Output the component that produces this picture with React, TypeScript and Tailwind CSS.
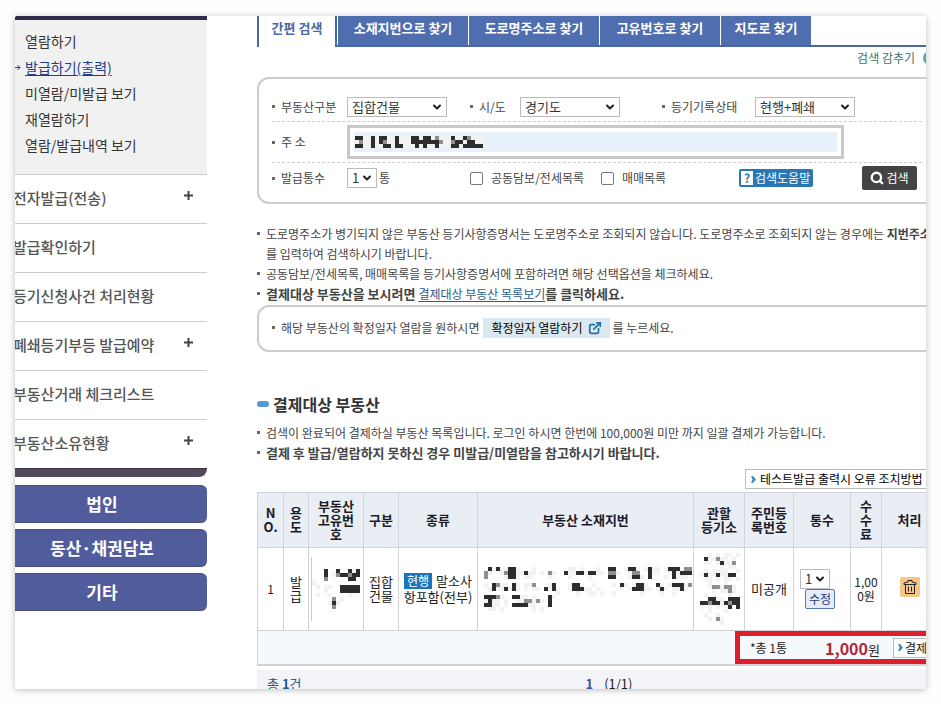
import type { ReactNode } from "react";
import { ChevronDown, ExternalLink, Search } from "lucide-react";

const SUB_MENU = ["열람하기", "발급하기(출력)", "미열람/미발급 보기", "재열람하기", "열람/발급내역 보기"];

const MENU = [
  { label: "전자발급(전송)", more: true },
  { label: "발급확인하기", more: false },
  { label: "등기신청사건 처리현황", more: false },
  { label: "폐쇄등기부등 발급예약", more: true },
  { label: "부동산거래 체크리스트", more: false },
  { label: "부동산소유현황", more: true },
];

const TABS = [
  { label: "소재지번으로 찾기", width: "w-[130px]" },
  { label: "도로명주소로 찾기", width: "w-[130px]" },
  { label: "고유번호로 찾기", width: "w-[120px]" },
  { label: "지도로 찾기", width: "w-[90px]" },
];

const COLUMNS = [
  { label: "N\nO.", width: "w-[26px]" },
  { label: "용\n도", width: "w-[25px]" },
  { label: "부동산\n고유번\n호", width: "w-[55px]" },
  { label: "구분", width: "w-[35px]" },
  { label: "종류", width: "w-[79px]" },
  { label: "부동산 소재지번", width: "w-[216px]" },
  { label: "관할\n등기소", width: "w-[51px]" },
  { label: "주민등\n록번호", width: "w-[49px]" },
  { label: "통수", width: "w-[57px]" },
  { label: "수\n수\n료", width: "w-[31px]" },
  { label: "처리", width: "w-[56px]" },
];

const INPUT_MASK = [
  "##..#.##..#...##.##.+...#..#+...",
  ".+..#.#+..#...#######+..+##.##..",
  "##..#..##.##...#.#..#...##.#####",
];

const ID_MASK = [
  "   #  #  #.#",
  "   # .+##+##",
  "   +     ## ",
  ".           ",
  " . ..  #####",
  "   .   #####",
  " .  .    .  ",
  "     + .    ",
  "    .#.     ",
  "     +      ",
];

const ADDRESS_MASK = [
  "  #.#..##.   .        .. .   .  ##  .##. .#.. .### ++",
  " +.  .+##..#.. . +.  #..##.##.. ++.  .++  #..  .#.###",
  " +    .##. ..    .    .    .    ##   .##. #   . #... ",
  "                                                     ",
  " . #+.. #. ..+   .#   .##.  .    . #. .##.  #. .###.+",
  "  .#..#.#. . .. #.#.  .###.. .     . .###.. .#. ..#. ",
  "                   .    .  .. .  .      .    .  .    ",
  " ###+.  ##.. .   #.                                  ",
  " .#.. .  ..++.+. #                                   ",
  " ##.. . ####..   #                                   ",
  "  .. .       . .                                     ",
];

const OFFICE_MASK = [
  "  . . .. .",
  " #..+.. . ",
  " .. .#..+ ",
  "     . .. ",
  " . ....  .",
  ".#..#..## ",
  " .. . .. .",
  "  .   .   ",
  "  .++.++. ",
  "   . ..+. ",
  " . .   .  ",
  "  ##.. ###",
  "##+##.#+##",
  ". . .  # #",
  "  .   .   ",
  " .  .     ",
  "  . +.    ",
  "     .    ",
];

const MASK_COLORS: Record<string, string> = { "#": "#2d2d2d", "+": "#8f8f8f", ".": "#f2f2f2" };

function Mosaic({ rows, className = "" }: { rows: string[]; className?: string }) {
  const cols = rows[0].length;
  return (
    <svg
      width={cols * 4}
      height={rows.length * 4}
      className={`shrink-0 ${className}`}
      shapeRendering="crispEdges"
      aria-hidden="true"
    >
      {rows.flatMap((row, y) =>
        [...row].map((c, x) =>
          MASK_COLORS[c] ? (
            <rect key={`${x}-${y}`} x={x * 4} y={y * 4} width="4" height="4" fill={MASK_COLORS[c]} />
          ) : null
        )
      )}
    </svg>
  );
}

function Dot() {
  return <span className="mr-1.5 size-[3px] shrink-0 bg-[#666]" />;
}

function Select({ id, label, value, width }: { id: string; label?: string; value: string; width: string }) {
  return (
    <span className={`relative inline-block shrink-0 ${width}`}>
      <select
        id={id}
        aria-label={label}
        className="block h-5 w-full appearance-none border border-[#bbb] bg-white pl-1 text-[13px] leading-4 text-[#333]"
      >
        <option>{value}</option>
      </select>
      <ChevronDown
        className="pointer-events-none absolute top-1 right-1 size-3 text-[#222]"
        strokeWidth={4}
      />
    </span>
  );
}

function Notice({ children, bold }: { children: ReactNode; bold?: boolean }) {
  return (
    <li className="flex">
      <span className="mt-2 mr-1.5 size-[3px] shrink-0 bg-[#666]" />
      <span className={bold ? "text-[13px] font-bold" : ""}>{children}</span>
    </li>
  );
}

function SmallArrow() {
  return (
    <svg width="5" height="7" viewBox="0 0 5 7" className="shrink-0" aria-hidden="true">
      <path d="M0 0h2l3 3.5L2 7H0l1.5-3.5z" fill="#3f8fb0" />
    </svg>
  );
}

function Sidebar() {
  return (
    <aside className="w-48 shrink-0">
      <ul className="border-t-4 border-[#322a4a] bg-[#f1f1f1] pt-2 pb-4 pl-2.5 text-sm leading-[26px] text-[#333]">
        {SUB_MENU.map((item, i) => (
          <li key={item} className="relative">
            {i === 1 && (
              <svg width="6" height="7" viewBox="0 0 6 7" className="absolute top-2.5 -left-2.5" aria-hidden="true">
                <path d="M0 3.5h5M2.5 1L5 3.5 2.5 6" fill="none" stroke="#1f3d8a" />
              </svg>
            )}
            <a href="#" className={i === 1 ? "text-[#1f3d8a] underline underline-offset-2" : ""}>
              {item}
            </a>
          </li>
        ))}
      </ul>
      <ul className="text-[15px] font-medium text-[#555]">
        {MENU.map(({ label, more }) => (
          <li
            key={label}
            className="-ml-0.5 flex h-[49px] items-center justify-between border-t border-[#ccc] pr-3.5 pb-0.5"
          >
            <a href="#">{label}</a>
            {more && (
              <svg width="9" height="9" className="mb-1.5" aria-hidden="true">
                <path d="M0 4.5h9M4.5 0v9" stroke="#444" strokeWidth="2" />
              </svg>
            )}
          </li>
        ))}
      </ul>
      <div className="h-[9px] rounded-br-lg border-t border-[#3d3848] bg-[#504a5c]" />
      <nav className="mt-2 flex flex-col gap-1.5 text-[17px] font-bold text-white">
        {["법인", "동산·채권담보", "기타"].map((item) => (
          <a
            key={item}
            href="#"
            className="flex h-[38px] items-center justify-center rounded-r-md border-y border-[#4a5084] bg-[#515c9d] pr-[18px]"
          >
            {item}
          </a>
        ))}
      </nav>
    </aside>
  );
}

function SearchTabs() {
  return (
    <div className="flex h-[31px] text-[13px] leading-[22px] font-bold text-white">
      <button className="w-20 shrink-0 border-x-2 border-[#4c69a6] pb-2 text-[#4c69a6]">간편 검색</button>
      <div className="flex flex-1 gap-px border-b-2 border-[#4c69a6] pl-px">
        {TABS.map(({ label, width }) => (
          <button key={label} className={`${width} shrink-0 bg-[#4f6eb0] pb-1.5`}>
            {label}
          </button>
        ))}
      </div>
    </div>
  );
}

function SearchForm() {
  return (
    <form className="rounded-xl border-2 border-[#ccc] px-[13px] pt-[13px] pb-[9px]">
      <div className="flex h-[30px] items-center border-b border-dashed border-[#ccc]">
        <label htmlFor="kind" className="flex w-[75px] items-center">
          <Dot />
          부동산구분
        </label>
        <Select id="kind" value="집합건물" width="w-[100px]" />
        <label htmlFor="city" className="ml-[23px] flex w-[50px] items-center">
          <Dot />
          시/도
        </label>
        <Select id="city" value="경기도" width="w-[100px]" />
        <label htmlFor="state" className="ml-[42px] flex w-[93px] items-center">
          <Dot />
          등기기록상태
        </label>
        <Select id="state" value="현행+폐쇄" width="w-[100px]" />
      </div>
      <div className="flex h-[41px] items-center border-b border-dashed border-[#ccc]">
        <label htmlFor="address" className="flex w-[75px] items-center">
          <Dot />주 소
        </label>
        <div className="relative w-[497px]">
          <input
            id="address"
            className="block h-[34px] w-full border-3 border-[#c9c9c9] bg-[#e8f0fb] bg-clip-content p-1"
          />
          <Mosaic rows={INPUT_MASK} className="absolute top-[11px] left-2" />
        </div>
      </div>
      <div className="flex h-[30px] items-center">
        <label htmlFor="copies" className="flex w-[75px] items-center">
          <Dot />
          발급통수
        </label>
        <Select id="copies" value="1" width="w-[30px]" />
        <span className="w-[93px] pl-0.5">통</span>
        <label className="flex w-[131px] items-center gap-2">
          <input type="checkbox" className="size-[13px] appearance-none rounded-xs border border-[#777] bg-white" />
          공동담보/전세목록
        </label>
        <label className="flex w-[138px] items-center gap-2">
          <input type="checkbox" className="size-[13px] appearance-none rounded-xs border border-[#777] bg-white" />
          매매목록
        </label>
        <button
          type="button"
          className="flex h-[18px] w-[74px] items-center gap-0.5 rounded-xs bg-[#2b76b5] pl-0.5 text-white"
        >
          <span className="flex h-3.5 w-3 shrink-0 items-center justify-center bg-white font-bold text-[#2b76b5]">
            ?
          </span>
          검색도움말
        </button>
        <button
          type="button"
          className="ml-[49px] flex h-6 w-[55px] items-center justify-center gap-0.5 rounded-xs bg-[#444] text-white"
        >
          <Search className="size-3.5" strokeWidth={4} />
          검색
        </button>
      </div>
    </form>
  );
}

function PaymentTable() {
  return (
    <table className="w-full table-fixed border-collapse border border-[#d0d3da] text-center text-[13px] leading-[14px] text-[#222]">
      <thead>
        <tr className="h-[55px] bg-[#e9eef5] text-[#1c1c28]">
          {COLUMNS.map(({ label, width }) => (
            <th key={label} className={`${width} border border-[#d0d3da] whitespace-pre-line`}>
              {label}
            </th>
          ))}
        </tr>
      </thead>
      <tbody>
        <tr className="h-[83px] [&>td]:border [&>td]:border-[#d0d3da]">
          <td className="text-xs">1</td>
          <td>
            발<br />급
          </td>
          <td className="pl-0.5">
            <div className="flex h-16 items-center border-l border-[#ccc]">
              <Mosaic rows={ID_MASK} />
            </div>
          </td>
          <td>
            집합
            <br />
            건물
          </td>
          <td className="leading-4">
            <span className="mr-1 inline-block bg-[#1a75bc] px-[3px] text-xs leading-4 text-white">현행</span>
            말소사
            <br />
            항포함(전부)
          </td>
          <td className="pl-0.5">
            <Mosaic rows={ADDRESS_MASK} />
          </td>
          <td>
            <Mosaic rows={OFFICE_MASK} className="ml-1.5" />
          </td>
          <td>미공개</td>
          <td>
            <div className="ml-1.5 flex w-[35px] flex-col">
              <Select id="row-copies" label="통수" value="1" width="w-[30px]" />
              <button className="h-5 w-[30px] self-end rounded-xs border border-[#5577b5] bg-[#e6edf9] text-xs text-[#1f3a7a]">
                수정
              </button>
            </div>
          </td>
          <td className="text-xs leading-[14px]">
            1,00
            <br />
            0원
          </td>
          <td>
            <button
              aria-label="삭제"
              className="mb-1 inline-flex size-5 items-center justify-center rounded-xs bg-[#f5c684] align-middle"
            >
              <svg width="14" height="16" viewBox="0 0 14 16" fill="none" stroke="#222" aria-hidden="true">
                <path d="M1 5.500V4L5 3V1.500h4V3l4 1v1.500zM2.500 5.500v9h9v-9M5.500 7.500v5M8.500 7.500v5" />
              </svg>
            </button>
          </td>
        </tr>
        <tr>
          <td colSpan={11} className="h-[34px] border-b-2 border-[#d0d3da] bg-[#f5f8fd] p-0">
            <div className="ml-auto flex h-[33px] w-[202px] items-center overflow-hidden border-[5px] border-[#dc1f2b] pl-2.5">
              <span className="w-[75px] shrink-0 text-left text-xs">*총 1통</span>
              <span className="w-[68px] shrink-0 text-left">
                <strong className="text-base font-semibold text-[#b02a3c]">1,000</strong>원
              </span>
              <button className="flex h-5 w-[60px] shrink-0 items-center gap-0.5 border border-[#bbb] bg-white pl-1 text-xs">
                <SmallArrow />
                결제
              </button>
            </div>
          </td>
        </tr>
      </tbody>
    </table>
  );
}

export default function App() {
  return (
    <div className="h-screen bg-[#fdfdfd] px-[15px] pt-4 pb-[15px] font-['Noto_Sans_CJK_KR',sans-serif]">
      <div className="flex h-full gap-[50px] overflow-hidden rounded-xs bg-white shadow-[0_1px_6px_rgba(0,0,0,0.25)]">
        <Sidebar />
        <main className="min-w-[680px] flex-1 text-xs whitespace-nowrap text-[#444]">
          <SearchTabs />
          <div className="flex h-[30px] items-center justify-end gap-2 pb-2">
            <a href="#" className="text-[#39766d]">
              검색 감추기
            </a>
            <span className="size-3.5 rounded-full bg-[#4db39a]" />
          </div>
          <SearchForm />
          <ul className="mt-5 leading-5">
            <Notice>
              도로명주소가 병기되지 않은 부동산 등기사항증명서는 도로명주소로 조회되지 않습니다. 도로명주소로 조회되지 않는
              경우에는 <strong>지번주소</strong>
              <br />를 입력하여 검색하시기 바랍니다.
            </Notice>
            <Notice>공동담보/전세목록, 매매목록을 등기사항증명서에 포함하려면 해당 선택옵션을 체크하세요.</Notice>
            <Notice bold>
              결제대상 부동산을 보시려면{" "}
              <a href="#" className="text-xs font-normal text-[#2a5d8f] underline underline-offset-2">
                결제대상 부동산 목록보기
              </a>
              를 클릭하세요.
            </Notice>
          </ul>
          <div className="mt-px flex h-[47px] items-center rounded-xl border-2 border-[#ccc] px-[13px] pb-0.5">
            <Dot />
            해당 부동산의 확정일자 열람을 원하시면
            <button className="mr-0.5 ml-1 flex h-5 w-[127px] items-center justify-center gap-1.5 bg-[#dbe8f0] text-black">
              확정일자 열람하기
              <ExternalLink className="size-3.5 text-[#2471a8]" strokeWidth={3} />
            </button>
            를 누르세요.
          </div>
          <h2 className="mt-10 flex items-center gap-1 text-base font-semibold text-[#333]">
            <span className="h-1.5 w-3 rounded-sm bg-[#4f9bd3]" />
            결제대상 부동산
          </h2>
          <ul className="mt-[7px] leading-5">
            <Notice>
              검색이 완료되어 결제하실 부동산 목록입니다. 로그인 하시면 한번에 100,000원 미만 까지 일괄 결제가 가능합니다.
            </Notice>
            <Notice bold>결제 후 발급/열람하지 못하신 경우 미발급/미열람을 참고하시기 바랍니다.</Notice>
          </ul>
          <button className="mt-1.5 mb-[3px] ml-auto flex h-5 w-48 items-center gap-1 border border-[#bbb] bg-white pl-[5px] text-black">
            <SmallArrow />
            테스트발급 출력시 오류 조치방법
          </button>
          <PaymentTable />
          <div className="mt-1 grid grid-cols-3 bg-[#f3f4f7] px-2.5 py-1 text-[13px] leading-5">
            <span className="text-[#1e5a86]">
              총 <strong>1</strong>건
            </span>
            <span className="pl-6 text-center text-[#222]">
              <strong className="mr-2 text-[#3a55a5]">1</strong> (1/1)
            </span>
          </div>
        </main>
      </div>
    </div>
  );
}
